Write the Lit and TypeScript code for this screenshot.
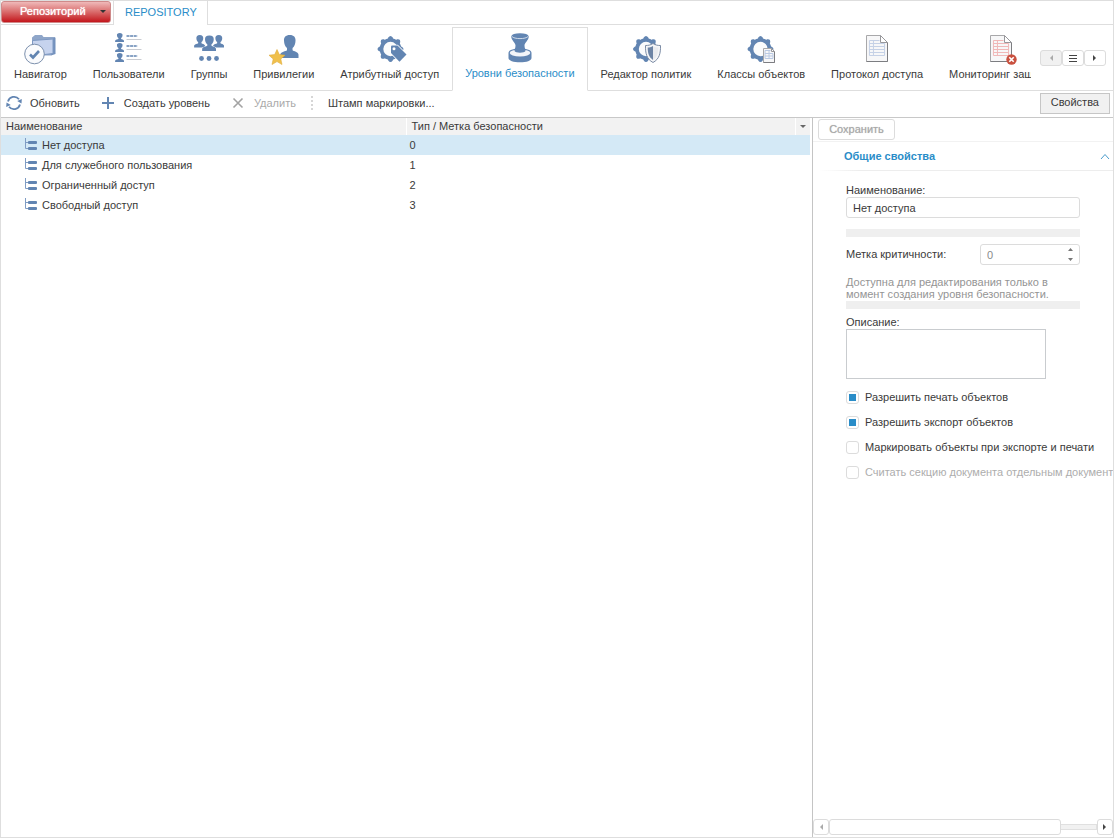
import { LitElement, html, svg, css, TemplateResult, SVGTemplateResult } from "lit";
import { customElement, state } from "lit/decorators.js";
import { classMap } from "lit/directives/class-map.js";

const BLUE = "#6285b2";

const gear = (cx: number, cy: number) => svg`
  <circle cx=${cx} cy=${cy} r="9" fill="#fafbfc" stroke=${BLUE} stroke-width="3.600"/>
  ${[0, 45, 90, 135, 180, 225, 270, 315].map((a) => svg`
    <path transform="rotate(${a} ${cx} ${cy})" fill=${BLUE}
      d="M${cx - 3.6} ${cy - 9.6}Q${cx - 2} ${cy - 10.4} ${cx - 2.3} ${cy - 11.4}Q${cx} ${cy - 14.6} ${cx + 2.3} ${cy - 11.4}Q${cx + 2} ${cy - 10.4} ${cx + 3.6} ${cy - 9.6}z"/>`)}
`;

const person = (x: number, y: number, w: number, h: number) => svg`
  <path transform="translate(${x} ${y}) scale(${w / 18} ${h / 23})" fill=${BLUE}
    d="M9.500 0C5.500 0 3.600 2.400 3.900 5.800C4 8.800 5 11.600 6.800 13V15.200C5.500 16.400 1 16.600 .200 19.500V23H18V19.500C17.400 16.600 13.500 16.400 12.200 15.200V13C14 11.600 15 8.800 15.100 5.800C15.300 2.400 13.500 0 9.500 0z"/>
`;

const sheet = (x: number, y: number, w: number, h: number, fold: number, line: string) => {
  const rows = h > 20 ? [8, 11, 14, 17, 20] : [5, 7.5, 10];
  const left = x + w * 0.14;
  const wide = w * 0.72;
  const end = y + rows[rows.length - 1];
  return svg`
    <path fill="#f7f7f8" stroke="#a8a8aa" d="M${x} ${y}h${w - fold}l${fold} ${fold}v${h - fold}h${-w}z"/>
    <path fill="none" stroke="#7c7d81" d="M${x} ${y + h}h${w}v${fold - h}"/>
    <path fill="#fff" stroke="#98989c" d="M${x + w - fold} ${y}v${fold}h${fold}z"/>
    <path fill="none" stroke=${line} d="M${left} ${y + rows[0] - 3}H${x + w - fold - 1}M${left} ${y + rows[0] - 3}V${end}M${left + 4} ${y + rows[0] - 3}V${end}M${left + wide} ${y + rows[0]}V${end}"/>
    ${rows.map((r) => svg`<path stroke=${line} d="M${left} ${y + r}h${wide}"/>`)}
  `;
};

const icons: Record<string, SVGTemplateResult> = {
  navigator: svg`
    <path fill="#8fa6c9" d="M10 4.500L13 2H20L21.500 4H33V18L29 22.500H10z"/>
    <path fill="#7391bd" d="M31 5.500L33.500 4.500V21L29 22.500z"/>
    <path fill="#c6d3ee" stroke="#7d98c2" d="M10.500 7.500L31 6V20.500L10.500 23z"/>
    <circle cx="12.500" cy="21" r="9.800" fill="#fafbfd" stroke="#7c90ad"/>
    <path fill="none" stroke=${BLUE} stroke-width="2.600" d="M8 21.500L11 24.500L17 18"/>`,
  users: svg`
    ${[0, 10, 20].map((y) => svg`
      ${person(4, y, 9, 9)}
      <path stroke=${BLUE} stroke-width="1.500" stroke-dasharray="3 .6" d="M15.500 ${y + 3}h11"/>
      <path stroke="#c9ccd2" d="M15.500 ${y + 6.5}h15"/>`)}`,
  groups: svg`
    ${person(3, 2, 11, 12.5)}${person(22, 2, 11, 12.5)}
    <g stroke="#fff" stroke-width="1.500" paint-order="stroke">${person(11, 2.5, 14, 15.5)}</g>
    <g fill=${BLUE}><circle cx="10.500" cy="25.500" r="2.400"/><circle cx="18" cy="25.500" r="2.400"/><circle cx="25.500" cy="25.500" r="2.400"/></g>`,
  privileges: svg`
    ${person(14, 2, 18.5, 23)}
    <path fill="#f0c04c" stroke="#e0ad3c" stroke-width=".600" d="M11 16.500L13.300 21.600L19 22.200L14.800 26L16 31.500L11 28.600L6 31.500L7.200 26L3 22.200L8.700 21.600z"/>`,
  attributes: svg`
    ${gear(18.500, 16)}
    <path fill=${BLUE} stroke="#fff" stroke-width="1.600" stroke-linejoin="round" paint-order="stroke" d="M19 13.500Q19 12.500 20 12.500H25.500L34.500 21.500L27.500 28.700L19 20z"/>
    <circle cx="22" cy="15.800" r="1.500" fill="#fff"/>`,
  stamp: svg`
    <path fill=${BLUE} d="M6.500 21C6.500 18 11 16.500 18 16.500S29.500 18 29.500 21V26C29.500 28.800 24.500 30.300 18 30.300S6.500 28.800 6.500 26z"/>
    <ellipse cx="18" cy="21" rx="10.300" ry="3.400" fill="#f3f5f9"/>
    <path fill=${BLUE} d="M9.300 4.500C9.300 8.500 13.500 10.500 13.500 13.500C13.500 16 12.500 17 12.500 19C13.500 21.300 22.500 21.300 23.500 19C23.500 17 22.500 16 22.500 13.500C22.500 10.500 26.700 8.500 26.700 4.500z"/>
    <ellipse cx="18" cy="4.200" rx="8.600" ry="3" fill=${BLUE}/>
    <path fill="none" stroke="#d9e2ee" stroke-width=".900" d="M10 4.500C12 7.300 24 7.300 26 4.500"/>`,
  policy: svg`
    ${gear(18, 16)}
    <path fill="#f4f5f7" stroke="#7c8ca5" d="M25 10.500C22.500 12.200 20 12.500 17.500 12.500C17.300 20 18.500 26 25 29.500C31.500 26 32.700 20 32.500 12.500C30 12.500 27.500 12.200 25 10.500z"/>
    <path fill="#6d84a5" d="M25 13C23 14.200 21.500 14.500 19.700 14.600C19.600 20 21 24.500 25 27z"/>
    <path fill="#e9ebef" d="M25 13C27 14.200 28.500 14.500 30.300 14.600C30.400 20 29 24.500 25 27z"/>`,
  classes: svg`${gear(17.500, 16)}${sheet(20.500, 15.500, 11, 14, 3, "#b9c9e3")}`,
  protocol: svg`${sheet(7.500, 2.500, 21, 26, 7, "#c5d1e6")}`,
  monitoring: svg`
    ${sheet(7.500, 2.500, 21, 26, 7, "#f0b8b8")}
    <circle cx="28.500" cy="26.500" r="5.200" fill="#c9503f"/>
    <path stroke="#fff" stroke-width="1.600" d="M26.300 24.300l4.400 4.400M30.700 24.300l-4.400 4.400"/>`,
};

const ribbon: [string, string][] = [
  ["navigator", "Навигатор"],
  ["users", "Пользователи"],
  ["groups", "Группы"],
  ["privileges", "Привилегии"],
  ["attributes", "Атрибутный доступ"],
  ["stamp", "Уровни безопасности"],
  ["policy", "Редактор политик"],
  ["classes", "Классы объектов"],
  ["protocol", "Протокол доступа"],
  ["monitoring", "Мониторинг защиты"],
];

const levels: [string, number][] = [
  ["Нет доступа", 0],
  ["Для служебного пользования", 1],
  ["Ограниченный доступ", 2],
  ["Свободный доступ", 3],
];

const options = [
  { id: "print", text: "Разрешить печать объектов", on: true, off: false },
  { id: "export", text: "Разрешить экспорт объектов", on: true, off: false },
  { id: "mark", text: "Маркировать объекты при экспорте и печати", on: false, off: false },
  { id: "section", text: "Считать секцию документа отдельным документом", on: false, off: true },
];

const base = css`
  * { box-sizing: border-box; }
  button, input, textarea { font: inherit; color: inherit; margin: 0; }
  button { padding: 0; border: 0; background: none; white-space: nowrap; cursor: pointer; }
  button:disabled { cursor: default; }
  svg { display: block; flex: none; }
`;

@customElement("level-properties")
export class LevelProperties extends LitElement {
  static styles = [base, css`
    :host { display: flex; flex-direction: column; min-width: 0; overflow: hidden; }
    .bar { padding: 1px 5px; border-bottom: 1px solid #f2f2f2; flex: none; height: 24px; }
    .save { height: 21px; min-width: 77px; padding: 0 10px 2px; border: 1px solid #dcdcdc; border-radius: 3px; color: #a8a8a8; text-shadow: 0 0 1px #c0c0c0; }
    .head { display: flex; align-items: center; justify-content: space-between; height: 28px; margin: 0; padding: 0 3px 0 31px; font-size: 11px; color: #2a8dc8; }
    .rule { height: 1px; margin-left: 6px; background: linear-gradient(90deg, #fff, #ededed 40px); }
    .form { display: flex; flex-direction: column; align-items: flex-start; padding: 12px 0 0 33px; flex: 1; }
    label { line-height: 14px; white-space: nowrap; }
    .name { width: 234px; height: 21px; border: 1px solid #dcdcdc; border-radius: 3px; padding: 0 6px; }
    .strip { width: 234px; height: 8px; background: #efefef; }
    .name + .strip { margin-top: 11px; }
    .mark { display: flex; align-items: center; justify-content: space-between; width: 234px; margin: 7px 0 11px; }
    .mark label { padding-bottom: 2px; }
    .spin { display: flex; width: 100px; height: 21px; border: 1px solid #dcdcdc; border-radius: 3px; padding-right: 4px; }
    .spin input { flex: 1; min-width: 0; border: 0; padding: 0 6px; background: none; color: #8a8a8a; appearance: textfield; }
    .spin input::-webkit-inner-spin-button { display: none; }
    .hint { width: 234px; margin: 0 0 1px; color: #949494; line-height: 12px; }
    .desc { margin-top: 6px; }
    textarea { width: 200px; height: 50px; border: 1px solid #c9cccf; resize: none; display: block; }
    .checks { display: flex; flex-direction: column; gap: 11px; margin-top: 11px; }
    .check { display: flex; align-items: center; gap: 6px; }
    .check input { appearance: none; flex: none; width: 13px; height: 13px; border: 1px solid #dcdcdc; border-radius: 3px; background: #fff; padding: 2px; }
    .check input:checked::before { content: ""; display: block; width: 7px; height: 7px; background: #2a8dc8; }
    .dim { color: #adadad; }
    .scroll { display: flex; align-items: center; height: 16px; margin-bottom: 2px; }
    .arrow { display: flex; align-items: center; justify-content: center; flex: none; width: 16px; height: 16px; border: 1px solid #dcdcdc; border-radius: 3px; }
    .track { display: flex; align-items: center; flex: 1; height: 6px; border: 1px solid #e0e0e0; border-left: 0; background: #f1f1f1; }
    .thumb { flex: none; width: 87%; height: 16px; border: 1px solid #dcdcdc; border-radius: 3px; background: #fff; }
  `];

  render() {
    return html`
      <div class="bar"><button class="save" disabled>Сохранить</button></div>
      <h2 class="head">Общие свойства
        <svg width="10" height="8" viewBox="0 0 10 8"><path fill="none" stroke="#4a9ccc" d="M1 7L5 2.500L9 7"/></svg>
      </h2>
      <div class="rule"></div>
      <div class="form">
        <label for="name">Наименование:</label>
        <input id="name" class="name" type="text" .value=${"Нет доступа"}>
        <div class="strip"></div>
        <div class="mark">
          <label for="mark-value">Метка критичности:</label>
          <span class="spin">
            <input id="mark-value" type="number" .value=${"0"} disabled>
            <svg width="9" height="19" viewBox="0 0 9 19"><path fill="#777" d="M2 6h5L4.500 3zM2 13h5L4.500 16z"/></svg>
          </span>
        </div>
        <p class="hint">Доступна для редактирования только в момент создания уровня безопасности.</p>
        <div class="strip"></div>
        <label class="desc" for="desc">Описание:</label>
        <textarea id="desc"></textarea>
        <div class="checks">
          ${options.map((o) => html`
            <div class=${classMap({ check: true, dim: o.off })}>
              <input type="checkbox" id=${o.id} .checked=${o.on} ?disabled=${o.off}>
              <label for=${o.id}>${o.text}</label>
            </div>`)}
        </div>
      </div>
      <div class="scroll">
        <button class="arrow" aria-label="Влево"><svg width="4" height="6"><path fill="#aaa" d="M4 0v6L1 3z"/></svg></button>
        <div class="track"><div class="thumb"></div></div>
        <button class="arrow" aria-label="Вправо"><svg width="4" height="6"><path fill="#444" d="M0 0v6L3 3z"/></svg></button>
      </div>
    `;
  }
}

@customElement("app-root")
export class AppRoot extends LitElement {
  @state() private activeTab = "stamp";
  @state() private selected = 0;

  static styles = [base, css`
    :host {
      display: flex; flex-direction: column; box-sizing: border-box; height: 100vh;
      border: 1px solid #dedede; background: #fff; color: #3a3a3a;
      font: 11px "Liberation Sans", Arial, sans-serif; overflow: hidden;
    }
    .tabs { display: flex; flex: none; height: 24px; border-bottom: 1px solid #dedede; }
    .repo {
      display: flex; align-items: center; justify-content: space-between; width: 110px; height: 22px; padding: 0 4px 2px 18px;
      border: 1px solid #cf8a8a; border-radius: 3px; color: #fff; text-shadow: 0 0 1px #fff;
      background: linear-gradient(#efb9b9, #d96a6a 50%, #c3161c);
    }
    .tab { height: 24px; margin-left: 2px; padding: 0 10px 2px 11px; border: 1px solid #dedede; border-width: 0 1px; background: #fff; color: #2a8dc8; }
    .ribbon { display: flex; flex: none; height: 66px; }
    .items { display: flex; flex: 1; min-width: 0; overflow: hidden; }
    .item { display: flex; flex-direction: column; align-items: center; flex: none; gap: 3px; padding: 8px 13px 0; border-bottom: 1px solid #dedede; }
    .item.active { margin-top: 2px; padding: 4px 12px 0; border: 1px solid #dedede; border-bottom-color: #fff; color: #2a8dc8; }
    .pager { display: flex; align-items: flex-start; flex: none; padding: 25px 7px 0 9px; border-bottom: 1px solid #dedede; }
    .page { display: flex; align-items: center; justify-content: center; width: 22px; height: 16px; border: 1px solid #dcdcdc; border-radius: 3px; }
    .page:disabled { background: #f1f1f1; }
    .tools { display: flex; align-items: center; flex: none; height: 27px; border-bottom: 1px solid #c8c8c8; padding: 0 3px 2px 5px; }
    .tool { display: flex; align-items: center; height: 20px; gap: 8px; margin-right: 20px; }
    .tool:disabled { color: #aaa; }
    .split { width: 2px; height: 14px; margin: 0 15px 0 -5px; background: repeating-linear-gradient(#d6d6d6 0 2px, #fff 2px 4px); }
    .props { height: 21px; margin: 0 0 0 auto; padding: 0 10px 2px; border: 1px solid #c6c6c6; background: #f1f1f1; }
    .body { display: flex; flex: 1; min-height: 0; }
    .list { flex: 1; min-width: 0; padding-right: 2px; }
    .side { flex: none; width: 301px; border-left: 1px solid #c4c4c4; }
    table { width: 100%; table-layout: fixed; border-spacing: 0; }
    th { height: 17px; padding: 0 5px; background: #f2f2f2; text-align: left; font-weight: normal; line-height: 15px; }
    th:first-child { width: 50%; }
    th + th { border-left: 1px solid #fff; }
    th.menu { width: 15px; padding: 0 4px; }
    td { height: 20px; padding: 0 4px; }
    .selected td { background: #d4e9f6; }
    .cell { display: flex; align-items: center; gap: 5px; padding-left: 19px; }
  `];

  private tool(icon: SVGTemplateResult, text: string, off = false): TemplateResult {
    return html`<button class="tool" ?disabled=${off}><svg width="16" height="16" viewBox="0 0 16 16">${icon}</svg>${text}</button>`;
  }

  render() {
    return html`
      <div class="tabs">
        <button class="repo">Репозиторий<svg width="6" height="3"><path fill="#333" d="M0 0h6L3 3z"/></svg></button>
        <button class="tab">REPOSITORY</button>
      </div>
      <nav class="ribbon">
        <div class="items">
          ${ribbon.map(([id, text]) => html`
            <button class=${classMap({ item: true, active: id === this.activeTab })} @click=${() => (this.activeTab = id)}>
              <svg width="36" height="32" viewBox="0 0 36 32">${icons[id]}</svg>${text}
            </button>`)}
        </div>
        <div class="pager">
          <button class="page" disabled aria-label="Назад"><svg width="4" height="6"><path fill="#aaa" d="M4 0v6L1 3z"/></svg></button>
          <button class="page" aria-label="Список"><svg width="8" height="7"><path stroke="#444" d="M0 .500h8M0 3.500h8M0 6.500h8"/></svg></button>
          <button class="page" aria-label="Вперёд"><svg width="4" height="6"><path fill="#444" d="M0 0v6L3 3z"/></svg></button>
        </div>
      </nav>
      <div class="tools">
        ${this.tool(svg`<path fill="none" stroke=${BLUE} stroke-width="1.800" d="M2 6.500A6.300 6.300 0 0 1 13 4.200M14 9.500A6.300 6.300 0 0 1 3 11.800"/><path fill=${BLUE} d="M15.500 8.500L11.200 6L15.800 4zM.500 7.500L4.800 10L.200 12z"/>`, "Обновить")}
        ${this.tool(svg`<path stroke=${BLUE} stroke-width="2" d="M8 2v12M2 8h12"/>`, "Создать уровень")}
        ${this.tool(svg`<path stroke="#a3a3a3" stroke-width="1.600" d="M3.500 3.500l9 9M12.500 3.500l-9 9"/>`, "Удалить", true)}
        <span class="split"></span>
        <button class="tool">Штамп маркировки...</button>
        <button class="props">Свойства</button>
      </div>
      <div class="body">
        <div class="list">
          <table>
            <thead>
              <tr><th>Наименование</th><th>Тип / Метка безопасности</th>
                <th class="menu"><svg width="6" height="3"><path fill="#666" d="M0 0h6L3 3z"/></svg></th></tr>
            </thead>
            <tbody>
              ${levels.map(([name, mark], i) => html`
                <tr class=${classMap({ selected: i === this.selected })} @click=${() => (this.selected = i)}>
                  <td><div class="cell">
                    <svg width="13" height="14" viewBox="0 0 13 14"><path fill="none" stroke="#7f9cc4" d="M1.500 0V10.500H4M1.500 4.500H4"/><rect x="4" y="3" width="9" height="3" rx="1" fill=${BLUE}/><rect x="4" y="9" width="9" height="3" rx="1" fill=${BLUE}/></svg>
                    ${name}</div></td>
                  <td colspan="2">${mark}</td>
                </tr>`)}
            </tbody>
          </table>
        </div>
        <level-properties class="side"></level-properties>
      </div>
    `;
  }
}
